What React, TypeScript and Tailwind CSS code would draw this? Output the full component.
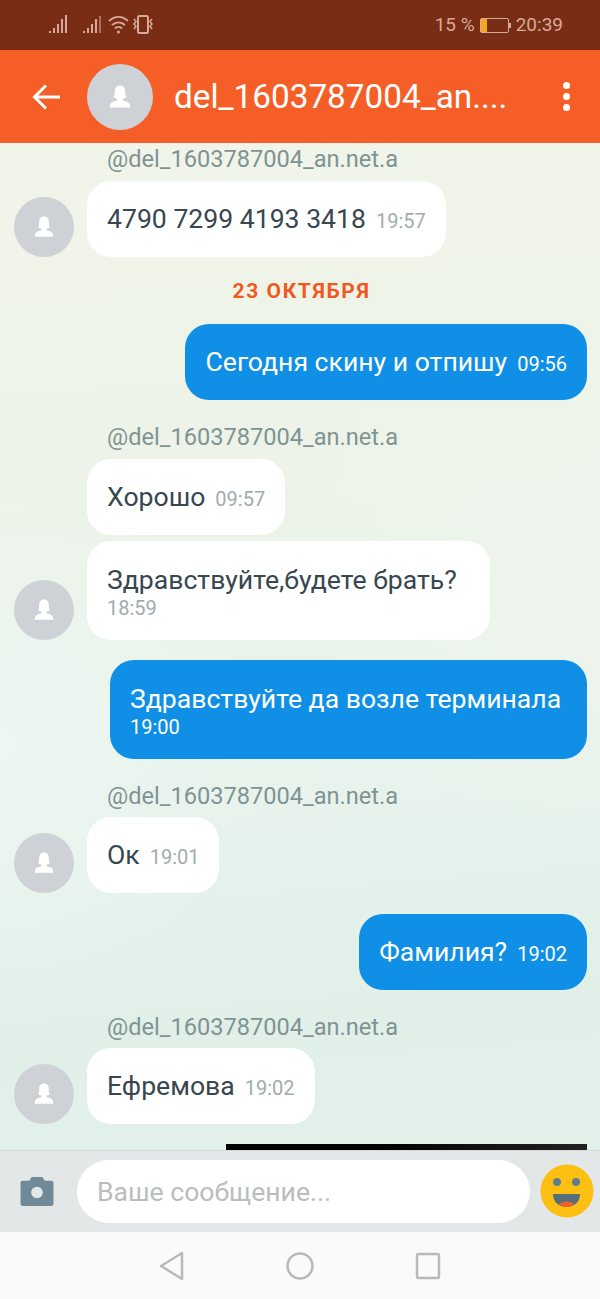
import React from "react";

const font = { fontFamily: "Roboto, sans-serif" };

const Person = ({ size, color = "#ffffff" }: { size: number; color?: string }) => (
  <svg width={size} height={size} viewBox="0 0 24 24" fill={color}>
    <path d="M12 0.500c-3.300 0-5.200 2.500-5.200 5.500 0 3-.3 5-1.100 6.500 1 .7 2.300 1 3.600 1.200v1.800c-3.200.7-6.300 1.800-7 3.800-.3 1-.4 2.800-.4 3.200h20.200c0-.4-.1-2.200-.4-3.200-.7-2-3.800-3.100-7-3.800v-1.800c1.300-.2 2.600-.5 3.600-1.200-.8-1.500-1.100-3.500-1.100-6.500 0-3-1.900-5.500-5.200-5.500z" />
  </svg>
);

const Avatar = () => (
  <div className="w-[60px] h-[60px] rounded-full bg-[#ced2d7] flex items-center justify-center shrink-0">
    <Person size={22} />
  </div>
);

const Name = ({ className = "" }: { className?: string }) => (
  <div className={`pl-[107px] text-[23.600px] leading-[28px] text-[#7f9393] ${className}`}>
    @del_1603787004_an.net.a
  </div>
);

const Incoming = ({
  text,
  time,
  avatar,
  stacked,
  className = "",
}: {
  text: string;
  time: string;
  avatar?: boolean;
  stacked?: boolean;
  className?: string;
}) => (
  <div className={`flex items-end pl-[14px] gap-[13px] ${className}`}>
    <div className="w-[60px] shrink-0">{avatar && <Avatar />}</div>
    <div
      className={`bg-white rounded-[24px] px-[20px] text-[#37474f] ${
        stacked ? "h-[99px] w-[403px] pt-[24px]" : "h-[76px] flex items-center gap-[10px]"
      }`}
    >
      <span className="text-[26.600px] leading-[30px]">{text}</span>
      <span className={`text-[#a2abad] text-[20px] leading-[24px] ${stacked ? "block" : "pt-[4px]"}`}>{time}</span>
    </div>
  </div>
);

const Outgoing = ({
  text,
  time,
  stacked,
  className = "",
}: {
  text: string;
  time: string;
  stacked?: boolean;
  className?: string;
}) => (
  <div className={`flex justify-end pr-[13px] ${className}`}>
    <div
      className={`bg-[#0f8fe6] rounded-[24px] px-[20px] text-white ${
        stacked ? "h-[99px] w-[477px] pt-[24px]" : "h-[76px] flex items-center gap-[10px]"
      }`}
    >
      <span className="text-[26.600px] leading-[30px]">{text}</span>
      <span className={`text-[20px] leading-[24px] ${stacked ? "block" : "pt-[4px]"}`}>{time}</span>
    </div>
  </div>
);

const StatusBar = () => (
  <div className="h-[50px] bg-[#7a2d15] flex items-center justify-between pl-[49px] pr-[37px] text-[#d6a999] text-[19px]">
    <svg width="106" height="22" viewBox="0 0 106 22" fill="none" stroke="#d6a999" strokeWidth="2">
      <path d="M1 19v-2M5 19v-5M9 19V10M13 19V5M17 19V1" />
      <path d="M35 19v-2M39 19v-5M43 19V10M47 19V5" />
      <path d="M51 19V2" opacity=".55" />
      <path d="M60 7c6-5.500 13-5.500 19 0M63 11c4-3.500 9-3.500 13 0M66 14.500c2-2 5-2 7 0" />
      <circle cx="69.500" cy="18" r="1.500" fill="#d6a999" stroke="none" />
      <rect x="89" y="2" width="10" height="17" rx="1.500" />
      <path d="M85 5l2 2.500-2 2.500 2 2.500-2 2.500M103 5l-2 2.500 2 2.500-2 2.500 2 2.500" strokeWidth="1.500" />
    </svg>
    <div className="flex items-center gap-[5px]">
      <span>15 %</span>
      <div className="relative w-[29px] h-[15px] border border-[#d6a999] rounded-[2px] mr-[2px]">
        <div className="w-[6px] h-full bg-[#f5a623]" />
        <div className="absolute right-[-3px] top-[4px] w-[2px] h-[5px] bg-[#d6a999]" />
      </div>
      <span>20:39</span>
    </div>
  </div>
);

const Header = () => (
  <div className="h-[93px] bg-[#f55f27] flex items-center text-white shrink-0">
    <svg className="ml-[29px]" width="34" height="34" viewBox="0 0 34 34" fill="none" stroke="#fff" strokeWidth="3">
      <path d="M31 17H6M17 5.500 5.500 17 17 28.500" />
    </svg>
    <div className="ml-[24px] w-[66px] h-[66px] rounded-full bg-[#ced2d7] flex items-center justify-center">
      <Person size={24} />
    </div>
    <div className="ml-[21px] text-[33.300px] leading-none whitespace-nowrap">del_1603787004_an....</div>
    <div className="ml-auto mr-[30px] flex flex-col gap-[4px]">
      <div className="w-[7px] h-[7px] rounded-full bg-white" />
      <div className="w-[7px] h-[7px] rounded-full bg-white" />
      <div className="w-[7px] h-[7px] rounded-full bg-white" />
    </div>
  </div>
);

const InputBar = () => (
  <div className="h-[82px] bg-[#e3e7e8] border-t border-[#d3d9d9] flex items-center shrink-0">
    <svg className="ml-[20px]" width="34" height="31" viewBox="0 0 34 32">
      <path
        fill="#708a98"
        d="M2 5h7l2.500-4h11L25 5h7c1 0 2 1 2 2v22c0 1-1 2-2 2H2c-1 0-2-1-2-2V7c0-1 1-2 2-2z"
      />
      <circle cx="17" cy="17" r="6" fill="#e3e7e8" />
    </svg>
    <div className="ml-[23px] w-[453px] h-[63px] rounded-[32px] bg-white flex items-center pl-[20px] text-[26.600px] text-[#b9bdbd]">
      Ваше сообщение...
    </div>
    <svg className="ml-[10px] -mt-[2px]" width="54" height="54" viewBox="0 0 54 54">
      <circle cx="27" cy="27" r="26.500" fill="#fdc012" />
      <circle cx="17" cy="18" r="4" fill="#607d8b" />
      <circle cx="36" cy="18" r="4" fill="#607d8b" />
      <path d="M13 30h27c0 8-6 13-13.500 13S13 38 13 30z" fill="#546e7a" />
      <path d="M19 40c3-3.500 12-3.500 15 0-2 2-4.500 3-7.500 3s-5.500-1-7.500-3z" fill="#f55f27" />
    </svg>
  </div>
);

const NavBar = () => (
  <div className="h-[67px] bg-[#fafafa] flex items-center justify-center gap-[100px] shrink-0">
    <svg width="28" height="30" viewBox="0 0 28 30" fill="none" stroke="#b9b9b9" strokeWidth="2.500" strokeLinejoin="round">
      <path d="M24 2 3 15l21 13z" />
    </svg>
    <svg width="28" height="30" viewBox="0 0 28 30" fill="none" stroke="#b9b9b9" strokeWidth="2.500">
      <circle cx="14" cy="15" r="12.500" />
    </svg>
    <svg width="28" height="30" viewBox="0 0 28 30" fill="none" stroke="#b9b9b9" strokeWidth="2.500">
      <rect x="3" y="3" width="22" height="24" rx="1.500" />
    </svg>
  </div>
);

export default function App() {
  return (
    <div className="w-[600px] h-[1299px] flex flex-col overflow-hidden" style={font}>
      <StatusBar />
      <Header />
      <div className="flex-1 relative overflow-hidden bg-[radial-gradient(circle_at_0%_60%,#edf6f1_0%,transparent_30%),radial-gradient(circle_at_100%_40%,#eef5ec_0%,transparent_35%),linear-gradient(175deg,#f1f4e9_0%,#edf3e8_30%,#e8f3ec_60%,#e0f0e9_85%,#e2f0ea_100%)]">
        <Name className="pt-[2px]" />
        <Incoming text="4790 7299 4193 3418" time="19:57" avatar className="mt-[8px]" />
        <div className="mt-[20px] h-[28px] pl-[3px] text-center text-[#f0591f] text-[21px] leading-[28px] font-bold tracking-[1.6px]">
          23 ОКТЯБРЯ
        </div>
        <Outgoing text="Сегодня скину и отпишу" time="09:56" className="mt-[19px]" />
        <Name className="mt-[23px]" />
        <Incoming text="Хорошо" time="09:57" className="mt-[8px]" />
        <Incoming text="Здравствуйте,будете брать?" time="18:59" avatar stacked className="mt-[6px]" />
        <Outgoing text="Здравствуйте да возле терминала" time="19:00" stacked className="mt-[20px]" />
        <Name className="mt-[23px]" />
        <Incoming text="Ок" time="19:01" avatar className="mt-[7px]" />
        <Outgoing text="Фамилия?" time="19:02" className="mt-[21px]" />
        <Name className="mt-[23px]" />
        <Incoming text="Ефремова" time="19:02" avatar className="mt-[7px]" />
        <div className="absolute left-[226px] right-[13px] bottom-0 h-[6px] bg-[linear-gradient(90deg,#000000_40%,#222222_100%)]" />
      </div>
      <InputBar />
      <NavBar />
    </div>
  );
}
